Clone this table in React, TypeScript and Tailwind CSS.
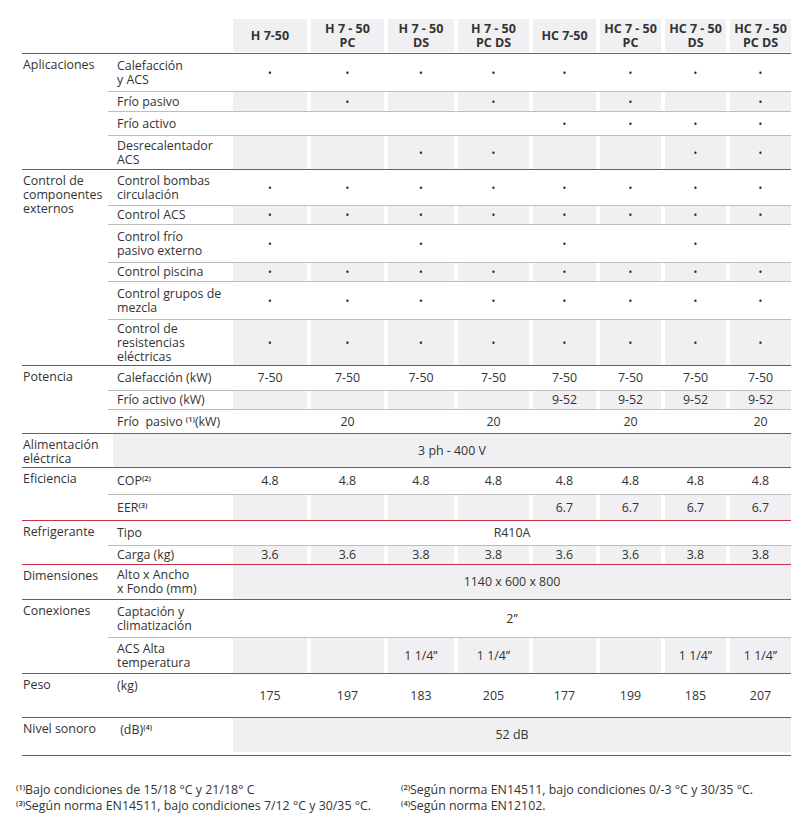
import type { ReactNode } from 'react'

const COLS = 'grid grid-cols-[74px_73px_66px_71px_63px_61px_61px_61px] gap-x-[4px]'
const GREY = 'bg-[#f0f0f2]'

type Row = {
  label: ReactNode
  h: string
  grey?: boolean
  vals?: string[]
  merged?: string
  mergeSub?: boolean
  top?: boolean
}

type Section = { cat: ReactNode; rows: Row[]; extra?: string }

const D = '•'
const all = [D, D, D, D, D, D, D, D]

const Sup = ({ n }: { n: number }) => (
  <span className="text-[7.5px] font-semibold leading-none align-[4px]">({n})</span>
)

const headers = [
  ['H 7-50'],
  ['H 7 - 50', 'PC'],
  ['H 7 - 50', 'DS'],
  ['H 7 - 50', 'PC DS'],
  ['HC 7-50'],
  ['HC 7 - 50', 'PC'],
  ['HC 7 - 50', 'DS'],
  ['HC 7 - 50', 'PC DS'],
]

// heights are border-box: rows after the first carry a 1px top border
const sections: Section[] = [
  {
    cat: 'Aplicaciones',
    rows: [
      { label: <>Calefacción<br />y ACS</>, h: 'h-[37px]', vals: all },
      { label: 'Frío pasivo', h: 'h-[20px]', grey: true, vals: ['', D, '', D, '', D, '', D] },
      { label: 'Frío activo', h: 'h-[24px]', vals: ['', '', '', '', D, D, D, D] },
      { label: <>Desrecalentador<br />ACS</>, h: 'h-[34px]', grey: true, vals: ['', '', D, D, '', '', D, D] },
    ],
  },
  {
    cat: <>Control de<br />componentes<br />externos</>,
    rows: [
      { label: <>Control bombas<br />circulación</>, h: 'h-[35px]', vals: all },
      { label: 'Control ACS', h: 'h-[19px]', grey: true, vals: all },
      { label: <>Control frío<br />pasivo externo</>, h: 'h-[38px]', vals: [D, '', D, '', D, '', D, ''] },
      { label: 'Control piscina', h: 'h-[19px]', grey: true, vals: all },
      { label: <>Control grupos de<br />mezcla</>, h: 'h-[38px]', vals: all },
      { label: <>Control de<br />resistencias<br />eléctricas</>, h: 'h-[46px]', grey: true, vals: all },
    ],
  },
  {
    cat: 'Potencia',
    rows: [
      { label: 'Calefacción (kW)', h: 'h-[24px]', vals: Array(8).fill('7-50') },
      { label: 'Frío activo (kW)', h: 'h-[19px]', grey: true, vals: ['', '', '', '', '9-52', '9-52', '9-52', '9-52'] },
      { label: <>Frío&nbsp; pasivo <Sup n={1} />(kW)</>, h: 'h-[24px]', vals: ['', '20', '', '20', '', '20', '', '20'] },
    ],
  },
  {
    cat: <>Alimentación<br />eléctrica</>,
    rows: [{ label: '', h: 'h-[33px]', merged: '3 ph - 400 V', mergeSub: true, grey: true }],
  },
  {
    cat: 'Eficiencia',
    rows: [
      { label: <>COP<Sup n={2} /></>, h: 'h-[26px]', vals: Array(8).fill('4.8') },
      { label: <>EER<Sup n={3} /></>, h: 'h-[26px]', grey: true, vals: ['', '', '', '', '6.7', '6.7', '6.7', '6.7'] },
    ],
  },
  {
    cat: 'Refrigerante',
    rows: [
      { label: 'Tipo', h: 'h-[24px]', merged: 'R410A' },
      { label: 'Carga (kg)', h: 'h-[19px]', grey: true, vals: ['3.6', '3.6', '3.8', '3.8', '3.6', '3.6', '3.8', '3.8'] },
    ],
  },
  {
    cat: 'Dimensiones',
    rows: [{ label: <>Alto x Ancho<br />x Fondo (mm)</>, h: 'h-[34px]', merged: '1140 x 600 x 800', grey: true }],
  },
  {
    cat: 'Conexiones',
    rows: [
      { label: <>Captación y<br />climatización</>, h: 'h-[37px]', merged: '2”' },
      {
        label: <>ACS Alta<br />temperatura</>,
        h: 'h-[36px]',
        grey: true,
        vals: ['', '', '1 1/4”', '1 1/4”', '', '', '1 1/4”', '1 1/4”'],
      },
    ],
  },
  {
    cat: 'Peso',
    rows: [{ label: '(kg)', h: 'h-[43px]', top: true, vals: ['175', '197', '183', '205', '177', '199', '185', '207'] }],
  },
  {
    cat: 'Nivel sonoro',
    extra: 'pb-[3px]',
    rows: [{ label: <>&nbsp;(dB)<Sup n={4} /></>, h: 'h-[34px]', top: true, merged: '52 dB', grey: true }],
  },
]

function Value({ v, grey }: { v: string; grey?: boolean }) {
  const dot = v === D
  return (
    <div className={`flex items-center justify-center ${grey ? GREY : ''}`}>
      {dot ? <span className="text-[10px] leading-none text-[#222]">•</span> : v}
    </div>
  )
}

function SubRow({ row, first }: { row: Row; first: boolean }) {
  const border = first ? '' : 'border-t border-[#bdbdbd]'
  if (row.mergeSub) {
    return (
      <div className={`${border} ${row.h} pl-[5px]`}>
        <div className={`h-full flex items-center justify-center ${GREY}`}>{row.merged}</div>
      </div>
    )
  }
  return (
    <div className={`${border} ${row.h} flex`}>
      <div className={`w-[125px] shrink-0 pl-[9px] flex ${row.top ? 'items-start pt-[5px]' : 'items-center'}`}>
        <div>{row.label}</div>
      </div>
      {row.merged ? (
        <div className={`w-[558px] flex items-center justify-center ${row.grey ? GREY : ''}`}>{row.merged}</div>
      ) : (
        <div className={`${COLS} w-[558px]`}>
          {row.vals!.map((v, i) => (
            <Value key={i} v={v} grey={row.grey} />
          ))}
        </div>
      )}
    </div>
  )
}

export default function App() {
  return (
    <div
      className="w-[806px] h-[827px] bg-white text-[#333] text-[12.4px] leading-[14px] overflow-hidden"
      style={{ fontFamily: '"Open Sans", "Liberation Sans", sans-serif' }}
    >
      <div className="pt-[19px] pl-[22px] w-[791px]">
        <div className="flex h-[34px] pb-[1px]">
          <div className="w-[211px] shrink-0" />
          <div className={`${COLS} w-[558px]`}>
            {headers.map((h, i) => (
              <div
                key={i}
                className={`${GREY} flex flex-col items-center justify-center font-bold text-[12.5px] leading-[14px] text-[#333]`}
              >
                {h.map((t) => (
                  <span key={t}>{t}</span>
                ))}
              </div>
            ))}
          </div>
        </div>

        {sections.map((s, i) => (
          <div key={i} className={`flex border-t border-[#c8334b] ${s.extra ?? ''}`}>
            <div className="w-[86px] shrink-0 pl-[1px] pt-[4px]">{s.cat}</div>
            <div className="w-[683px] flex flex-col">
              {s.rows.map((r, j) => (
                <SubRow key={j} row={r} first={j === 0} />
              ))}
            </div>
          </div>
        ))}
        <div className="border-t border-[#c8334b]" />
      </div>

      <div className="mt-[26px] pl-[16px] grid grid-cols-[385px_1fr] text-[12.4px] leading-[16px] text-[#333]">
        <div>
          <Sup n={1} />
          Bajo condiciones de 15/18 °C y 21/18° C
        </div>
        <div>
          <Sup n={2} />
          Según norma EN14511, bajo condiciones 0/-3 °C y 30/35 °C.
        </div>
        <div>
          <Sup n={3} />
          Según norma EN14511, bajo condiciones 7/12 °C y 30/35 °C.
        </div>
        <div>
          <Sup n={4} />
          Según norma EN12102.
        </div>
      </div>
    </div>
  )
}
